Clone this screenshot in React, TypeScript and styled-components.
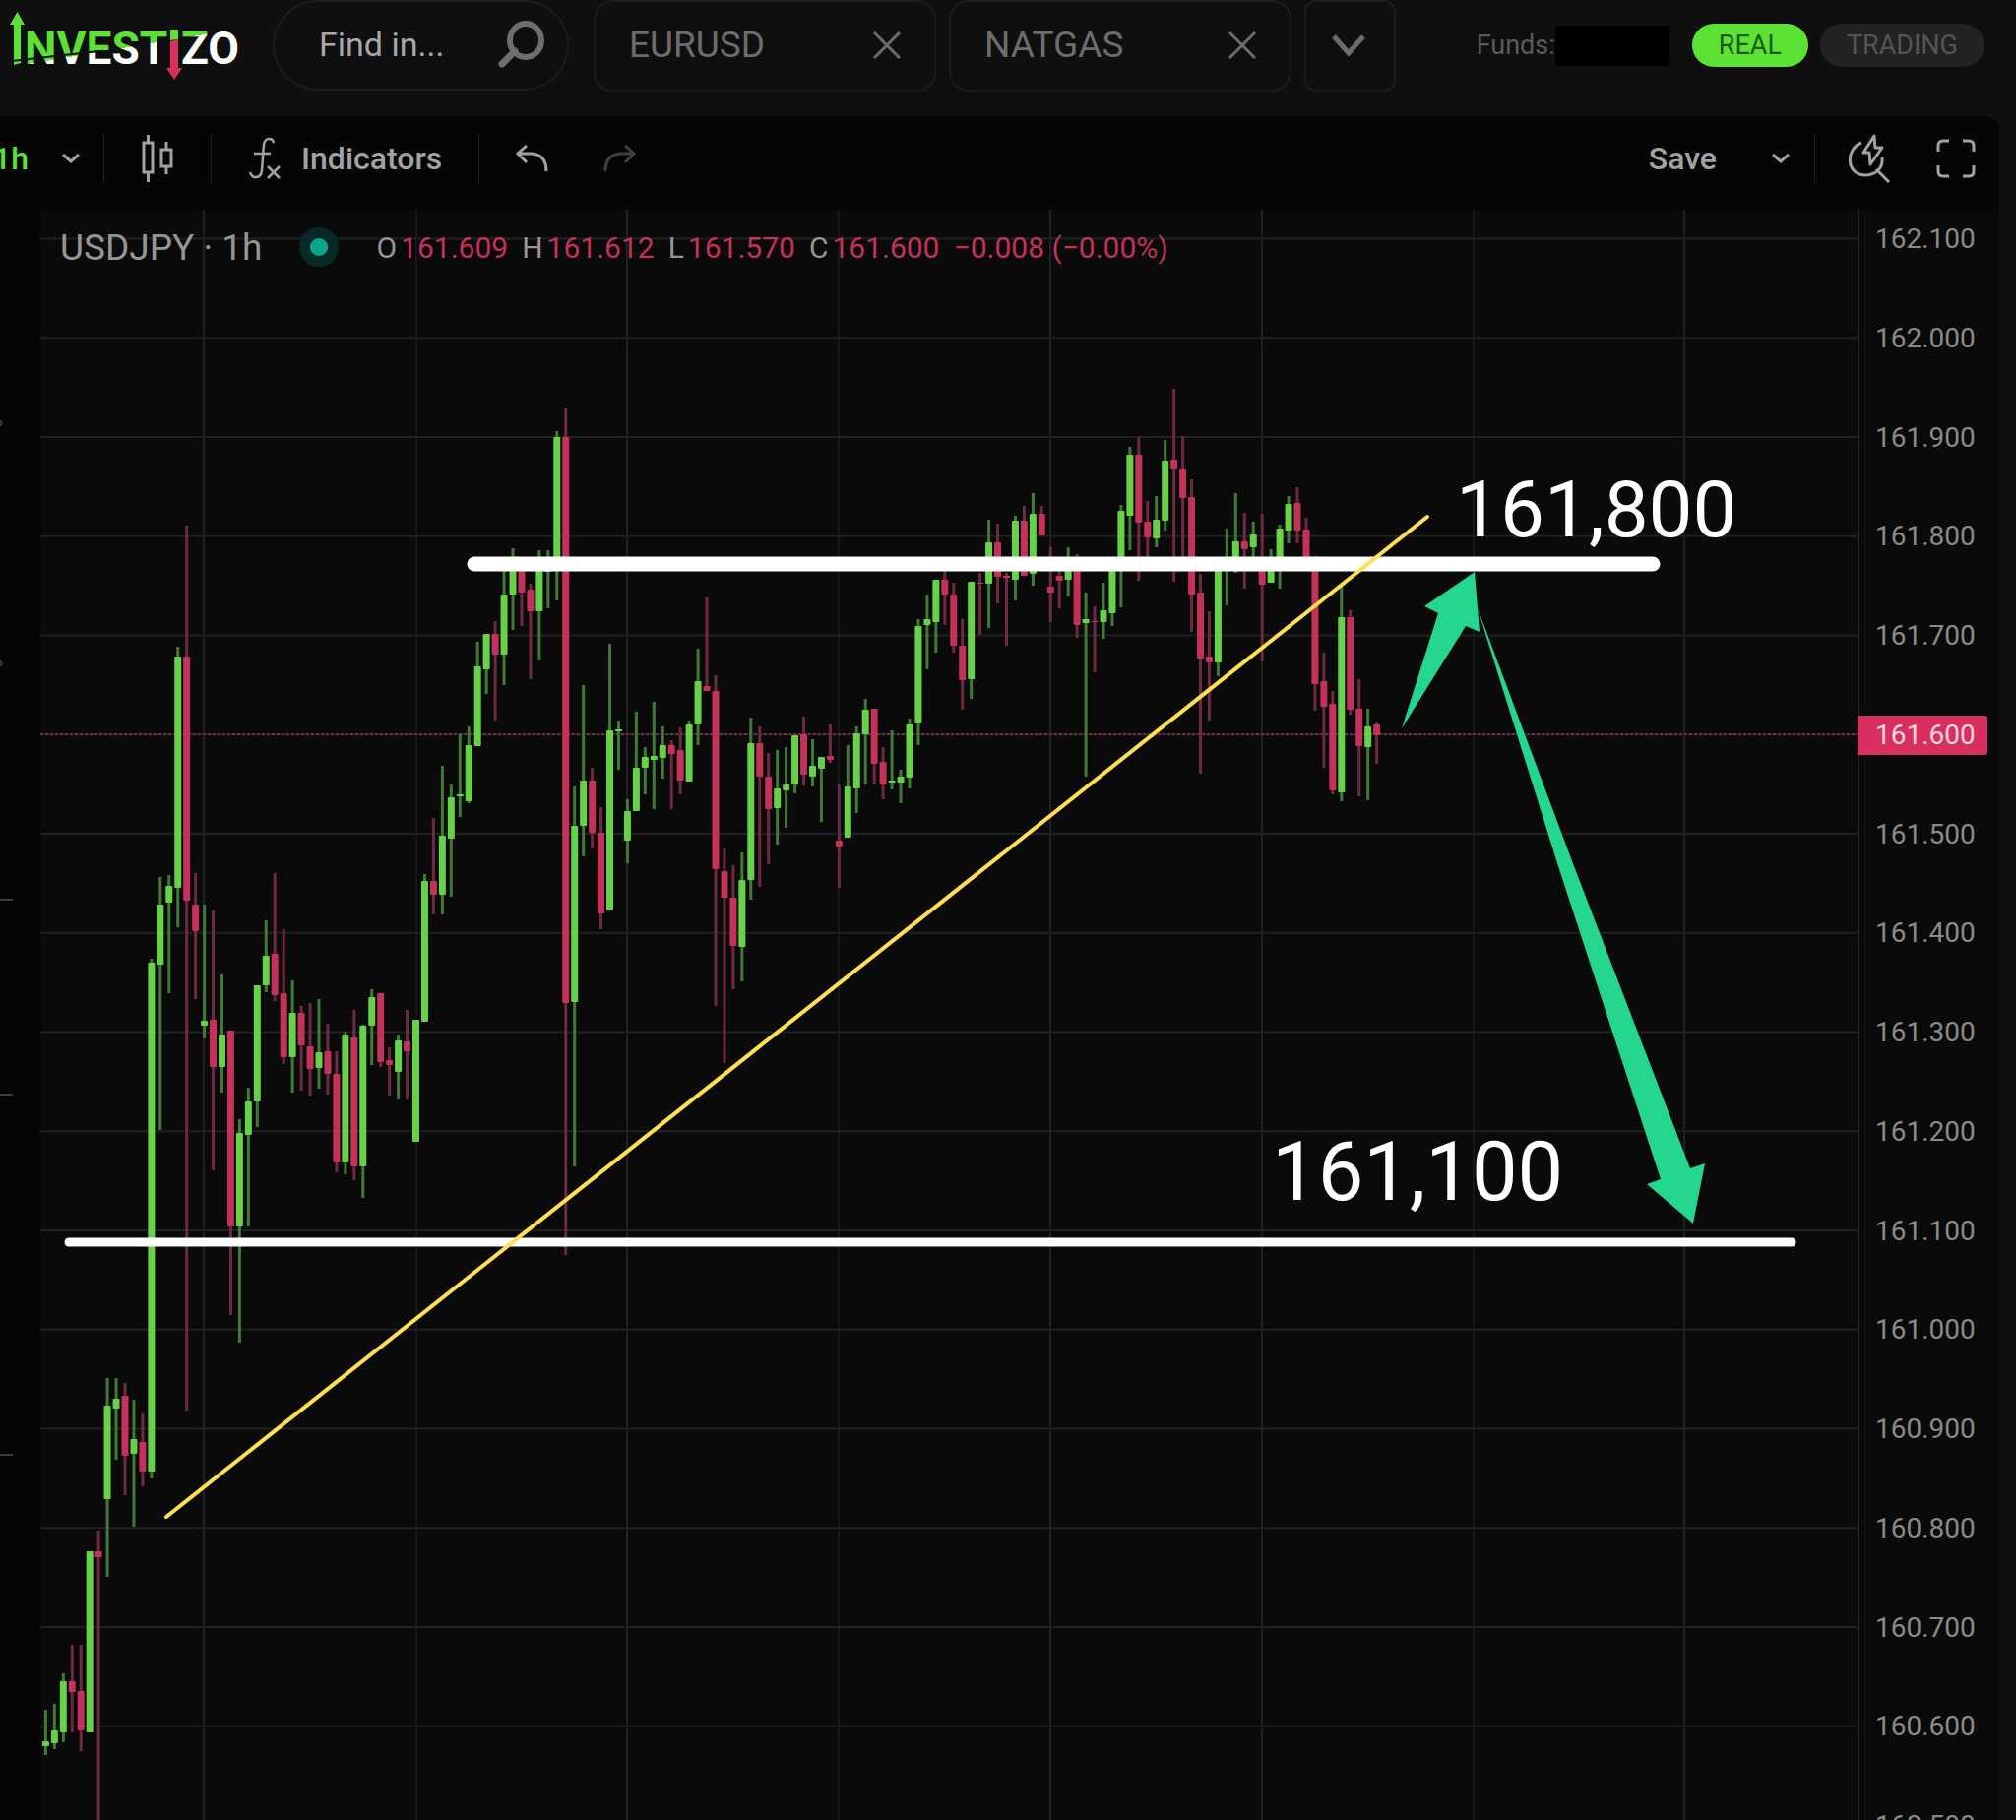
import React from "react";
import styled, { createGlobalStyle } from "styled-components";

const color = {
  header: "#0f0f0f",
  panel: "#050505",
  plot: "#0a0a0a",
  outline: "#1c1c1c",
  grid: "#212121",
  gridDim: "#171717",
  text: "#a2a2a2",
  muted: "#6c6c6c",
  brand: "#5be234",
  up: "#67d147",
  upWick: "#417a35",
  down: "#c43159",
  downWick: "#6f2a40",
  arrow: "#24d68e",
  trend: "#ffe052",
};

const GlobalStyle = createGlobalStyle`
  *, *::before, *::after { box-sizing: border-box; }
  body {
    margin: 0;
    background: ${color.header};
    font-family: Roboto, "Liberation Sans", sans-serif;
    color: ${color.text};
  }
  button, input { font: inherit; color: inherit; }
`;

const Page = styled.div`
  display: flex;
  flex-direction: column;
  min-height: 100vh;
  overflow: hidden;
`;

const Header = styled.header`
  display: flex;
  gap: 25px;
  height: 118px;
  padding-right: 32px;
`;

const Logo = styled.a`
  flex: none;
  display: block;
  width: 252px;
  height: 93px;

  svg { display: block; }
`;

const Search = styled.label`
  flex: 0 1 301px;
  display: flex;
  align-items: center;
  justify-content: space-between;
  height: 92px;
  padding: 0 22px 2px 45px;
  border: 2px solid ${color.outline};
  border-radius: 46px;
`;

const SearchInput = styled.input`
  width: 140px;
  padding: 0;
  border: 0;
  outline: 0;
  background: transparent;
  font-size: 34px;

  &::placeholder { color: #a8a8a8; opacity: 1; }
`;

const Tabs = styled.nav`
  flex: 0 1 815px;
  display: flex;
  gap: 13px;
`;

const Tab = styled.div`
  flex: 0 1 348px;
  display: flex;
  align-items: center;
  justify-content: space-between;
  height: 93px;
  padding: 0 34px 2px;
  border: 2px solid ${color.outline};
  border-radius: 20px;
  font-size: 37px;
  color: ${color.muted};
`;

const PlainButton = styled.button`
  display: flex;
  align-items: center;
  padding: 0;
  border: 0;
  background: none;
  cursor: pointer;
`;

const MoreTabs = styled(PlainButton)`
  flex: 0 0 93px;
  justify-content: center;
  height: 93px;
  padding-right: 3px;
  border: 2px solid ${color.outline};
  border-radius: 12px;
  color: ${color.muted};
`;

const Account = styled.div`
  display: flex;
  align-items: center;
  gap: 23px;
  height: 92px;
  margin-left: auto;
  font-size: 27px;
  color: #5a5a5a;
`;

const Funds = styled.div`
  display: flex;
  align-items: center;
`;

const FundsMask = styled.span`
  width: 116px;
  height: 41px;
  background: #000000;
`;

const Modes = styled.div`
  display: flex;
  gap: 12px;
`;

const ModeButton = styled.button<{ $active?: boolean }>`
  height: 44px;
  padding: 0 27px;
  border: 0;
  border-radius: 22px;
  line-height: 42px;
  background: ${(p) => (p.$active ? color.brand : "#222222")};
  color: ${(p) => (p.$active ? "#1c5a10" : "#555555")};
  cursor: pointer;
`;

const ChartPanel = styled.main`
  flex: 1;
  margin-right: 17px;
  border-top-right-radius: 16px;
  background: ${color.panel};
  overflow: hidden;
`;

const Toolbar = styled.div`
  display: flex;
  align-items: center;
  justify-content: space-between;
  height: 95px;
  padding: 0 24px 10px 0;
  font-size: 32px;
  font-weight: 500;
`;

const ToolGroup = styled.div`
  display: flex;
  align-items: center;
  gap: 37px;
`;

const Interval = styled(PlainButton)`
  gap: 34px;
  margin: 0 -13px 0 -7px;
  color: ${color.text};

  span { color: ${color.brand}; }
`;

const Indicators = styled(PlainButton)`
  gap: 20px;
`;

const History = styled.div`
  display: flex;
  gap: 56px;
`;

const SaveGroup = styled.div`
  display: flex;
  align-items: center;
  gap: 56px;
  margin-right: -12px;
`;

const ViewTools = styled.div`
  display: flex;
  gap: 46px;
  margin-left: -4px;
`;

const ToolButton = styled(PlainButton)`
  &:disabled { color: #404040; cursor: default; }
`;

const Separator = styled.span`
  width: 1px;
  height: 50px;
  background: #202020;
`;

const ChartBody = styled.div`
  display: flex;
`;

const Gutter = styled.div`
  flex: 0 0 41px;

  svg { display: block; }
`;

const Plot = styled.section`
  position: relative;
  flex: 1;
  background: ${color.plot};
`;

const Canvas = styled.svg`
  display: block;
  width: 100%;
  height: auto;
`;

const Legend = styled.div`
  position: absolute;
  top: 16px;
  left: 20px;
  display: flex;
  align-items: center;
  gap: 38px;
  height: 44px;
  font-size: 30px;
  white-space: nowrap;
`;

const Symbol = styled.h1`
  margin: 0;
  font-size: 37px;
  font-weight: 400;
  color: #969696;
`;

const Status = styled.span`
  width: 40px;
  height: 40px;
  border: 11px solid #062a25;
  border-radius: 50%;
  background: #0ca58c;
`;

const Quotes = styled.div`
  display: flex;
  gap: 14px;
  color: ${color.down};
`;

const Quote = styled.span`
  display: flex;
  gap: 4px;

  b { font-weight: 400; color: #969696; }
`;

const Axis = styled.aside`
  flex: 0 0 144px;
  display: flex;
  flex-direction: column;
  justify-content: space-between;
  align-items: flex-start;
  margin-bottom: -22px;
  padding-top: 14px;
  border-left: 2px solid #252525;
  background: ${color.plot};
  font-size: 28px;
  line-height: 32px;
  color: #8a8a8a;
`;

const Tick = styled.span`
  padding-left: 16px;
`;

const PriceTag = styled.span`
  margin: -4px 0 -4px -2px;
  padding: 4px 12px 4px 18px;
  border-radius: 0 3px 3px 0;
  background: #d92f60;
  color: #f3d6de;
`;

const Annotation = styled.text`
  font-family: Roboto, "Liberation Sans", sans-serif;
  fill: #ffffff;
`;

type Candle = [dir: 0 | 1, high: number, top: number, bottom: number, low: number];

const candles: Candle[] = [
  [1, 1737, 1769, 1774, 1783], [1, 1731, 1758, 1771, 1777], [1, 1700, 1708, 1760, 1770],
  [0, 1671, 1708, 1719, 1760], [0, 1671, 1718, 1758, 1779], [1, 1576, 1576, 1760, 1760],
  [0, 1555, 1576, 1582, 1900], [1, 1400, 1428, 1523, 1602], [1, 1400, 1421, 1431, 1483],
  [0, 1405, 1418, 1479, 1519], [1, 1422, 1462, 1477, 1551], [0, 1436, 1465, 1495, 1510],
  [1, 974, 978, 1495, 1502], [1, 891, 919, 980, 1148], [1, 889, 900, 917, 1009],
  [1, 657, 667, 902, 942], [0, 534, 667, 915, 1433], [0, 887, 919, 946, 1015],
  [1, 919, 1037, 1042, 1055], [0, 925, 1036, 1084, 1189], [1, 990, 1051, 1084, 1110],
  [0, 1047, 1047, 1246, 1336], [1, 1137, 1151, 1246, 1364], [1, 1105, 1119, 1153, 1246],
  [1, 1001, 1001, 1119, 1145], [1, 935, 971, 1001, 1008], [0, 887, 969, 1011, 1017],
  [0, 944, 1009, 1074, 1081], [1, 996, 1029, 1074, 1110], [0, 1022, 1029, 1062, 1108],
  [0, 1019, 1063, 1086, 1113], [1, 1015, 1069, 1085, 1106], [0, 1040, 1068, 1091, 1112],
  [0, 1068, 1091, 1181, 1191], [1, 1048, 1051, 1181, 1193], [0, 1026, 1054, 1185, 1199],
  [1, 1041, 1042, 1185, 1217], [1, 1005, 1013, 1042, 1082], [0, 1009, 1009, 1079, 1084],
  [0, 1064, 1077, 1082, 1113], [1, 1051, 1057, 1089, 1117], [0, 1026, 1058, 1068, 1117],
  [1, 1036, 1036, 1160, 1160], [1, 888, 895, 1038, 1038], [0, 831, 895, 909, 929],
  [1, 778, 849, 909, 929], [1, 797, 810, 852, 911], [1, 746, 807, 809, 830],
  [1, 738, 757, 814, 816], [1, 652, 677, 758, 758], [1, 644, 644, 680, 705],
  [0, 631, 644, 665, 732], [1, 578, 604, 665, 696], [1, 557, 575, 604, 640],
  [0, 572, 575, 602, 636], [0, 593, 599, 621, 690], [1, 559, 575, 621, 671],
  [1, 559, 575, 581, 618], [1, 438, 444, 573, 610], [0, 415, 444, 1019, 1275],
  [1, 799, 839, 1018, 1185], [1, 696, 793, 839, 870], [0, 780, 793, 846, 862],
  [0, 820, 846, 928, 944], [1, 654, 742, 925, 925], [1, 732, 741, 743, 782],
  [1, 812, 824, 854, 877], [1, 723, 780, 824, 824], [1, 759, 769, 780, 807],
  [1, 713, 768, 772, 822], [1, 738, 757, 770, 791], [0, 752, 757, 766, 822],
  [0, 739, 762, 793, 807], [1, 732, 736, 794, 794], [1, 659, 692, 736, 757],
  [0, 607, 697, 702, 702], [0, 686, 702, 883, 1022], [0, 862, 885, 912, 1080],
  [0, 879, 912, 961, 1005], [1, 866, 894, 962, 997], [1, 729, 755, 894, 914],
  [0, 738, 755, 789, 901], [0, 765, 789, 822, 878], [1, 762, 801, 821, 858],
  [1, 759, 797, 803, 841], [1, 747, 747, 797, 806], [0, 728, 746, 787, 798],
  [1, 751, 778, 789, 799], [1, 769, 769, 781, 835], [0, 736, 768, 772, 775],
  [0, 797, 854, 860, 902], [1, 757, 799, 851, 851], [1, 738, 745, 801, 826],
  [1, 710, 721, 746, 797], [0, 720, 720, 776, 797], [0, 759, 774, 797, 812],
  [1, 742, 793, 795, 802], [1, 782, 789, 795, 816], [1, 730, 736, 790, 801],
  [1, 629, 636, 735, 757], [1, 604, 629, 635, 680], [1, 589, 589, 632, 663],
  [0, 577, 589, 604, 635], [0, 592, 604, 656, 663], [0, 629, 656, 691, 721],
  [1, 591, 591, 690, 710], [0, 582, 592, 593, 645], [1, 528, 551, 593, 638],
  [0, 532, 551, 586, 613], [0, 582, 585, 587, 656], [1, 524, 529, 589, 610],
  [0, 514, 529, 585, 585], [1, 501, 522, 583, 595], [0, 514, 522, 544, 544],
  [0, 556, 596, 602, 632], [0, 573, 585, 590, 618], [1, 556, 577, 589, 606],
  [0, 563, 570, 635, 648], [1, 602, 629, 633, 789], [0, 616, 631, 632, 683],
  [1, 592, 620, 632, 649], [1, 570, 570, 623, 636], [1, 513, 519, 575, 617],
  [1, 454, 462, 524, 559], [0, 444, 462, 531, 590], [0, 509, 530, 546, 570],
  [1, 504, 528, 547, 556], [1, 447, 468, 529, 539], [0, 395, 467, 476, 591],
  [0, 443, 476, 506, 570], [0, 487, 505, 604, 642], [0, 583, 602, 669, 786],
  [0, 621, 667, 673, 732], [1, 577, 577, 673, 687], [1, 537, 578, 580, 615],
  [1, 501, 550, 577, 582], [0, 521, 550, 558, 598], [1, 530, 543, 556, 570],
  [0, 522, 577, 594, 672], [1, 558, 570, 592, 592], [1, 533, 537, 577, 598],
  [1, 504, 512, 539, 552], [0, 495, 511, 539, 552], [0, 526, 538, 572, 572],
  [0, 565, 570, 695, 722], [0, 663, 692, 718, 780], [0, 702, 715, 803, 807],
  [1, 595, 627, 805, 814], [0, 620, 627, 721, 726], [0, 690, 720, 758, 809],
  [1, 720, 738, 759, 813], [0, 734, 736, 747, 776],
];

const ticks = Array.from({ length: 17 }, (_, i) => (162.1 - i * 0.1).toFixed(3));
const columns = [207, 423, 637, 852, 1067, 1282, 1497, 1711];

const quotes = [
  ["O", "161.609"],
  ["H", "161.612"],
  ["L", "161.570"],
  ["C", "161.600"],
];

function LogoMark() {
  return (
    <svg width="252" height="93" viewBox="0 0 252 93" role="img" aria-label="Investizo">
      <defs>
        <linearGradient id="logoSplit" gradientUnits="userSpaceOnUse" x1="125" y1="18" x2="135" y2="78">
          <stop offset="0.5" stopColor={color.brand} />
          <stop offset="0.5" stopColor="#ffffff" />
        </linearGradient>
      </defs>
      <g fontFamily="Roboto, sans-serif" fontWeight="700" fontSize="46" fill="url(#logoSplit)">
        <text x="25" y="65">NVEST</text>
        <text x="184" y="65">ZO</text>
      </g>
      <path d="M17.500 12L25 25H21V64L14 66V25H10Z" fill={color.brand} />
      <path d="M173 30H181V40L173 41Z" fill={color.brand} />
      <path d="M173 42L181 40V69H185L177 81L169 69H173Z" fill="#dc2f60" />
      <path d="M12 62L100 52" stroke={color.header} strokeWidth="2" />
    </svg>
  );
}

const stroke = { fill: "none", stroke: "currentColor", strokeWidth: 3 };

const CloseIcon = () => (
  <svg width="28" height="28" viewBox="0 0 28 28" {...stroke}>
    <path d="M1 1L27 27M27 1L1 27" />
  </svg>
);

const ChevronIcon = () => (
  <svg width="18" height="12" viewBox="0 0 18 12" {...stroke}>
    <path d="M1 2L9 9L17 2" />
  </svg>
);

function PlotCanvas() {
  return (
    <Canvas viewBox="41 213 1846 1636" role="img" aria-label="USDJPY hourly candles">
      {columns.map((x, i) => (
        <path
          key={x}
          d={`M${x} 213V1849`}
          stroke={[1, 3, 6].includes(i) ? color.gridDim : color.grid}
          strokeWidth="2"
        />
      ))}
      {ticks.map((t, i) => (
        <path key={t} d={`M41 ${242.5 + i * 100.75}H1888`} stroke={color.grid} strokeWidth="2" />
      ))}
      <path d="M41 746H1888" stroke="#702c40" strokeWidth="2" strokeDasharray="3 2" />
      {candles.map(([up, high, top, bottom, low], i) => {
        const x = 46.4 + i * 8.955;
        return (
          <g key={i}>
            <rect x={x - 1.5} y={high} width="3" height={low - high} fill={up ? color.upWick : color.downWick} />
            <rect
              x={x - 3.5}
              y={top}
              width="7"
              height={bottom - top}
              rx={bottom - top > 4 ? 1 : 0}
              fill={up ? color.up : color.down}
            />
          </g>
        );
      })}
      <g stroke="#ffffff" strokeLinecap="round">
        <path d="M482 573H1679" strokeWidth="15" />
        <path d="M70 1262H1820" strokeWidth="9" />
      </g>
      <path d="M169 1541L1450 525" stroke={color.trend} strokeWidth="4" strokeLinecap="round" />
      <g fill={color.arrow}>
        <path d="M1424 740L1461 623L1447 616L1498 581L1503 642L1489 636Z" />
        <path d="M1500 615L1583 880L1687 1198L1673 1203L1720 1243L1732 1182L1717 1187L1599 880Z" />
      </g>
      <Annotation x="1479" y="545" fontSize="80">161,800</Annotation>
      <Annotation x="1292" y="1219" fontSize="83">161,100</Annotation>
    </Canvas>
  );
}

export default function App() {
  return (
    <>
      <GlobalStyle />
      <Page>
        <Header>
          <Logo href="#"><LogoMark /></Logo>
          <Search>
            <SearchInput type="text" placeholder="Find in..." aria-label="Find instrument" />
            <svg width="48" height="48" viewBox="0 0 48 48" fill="none" stroke="#6e6e6e">
              <ellipse cx="28" cy="20" rx="16" ry="17" strokeWidth="6" />
              <path d="M17 31L4 44" strokeWidth="7" strokeLinecap="round" />
            </svg>
          </Search>
          <Tabs>
            {["EURUSD", "NATGAS"].map((name) => (
              <Tab key={name}>
                <span>{name}</span>
                <PlainButton aria-label={`Close ${name}`}><CloseIcon /></PlainButton>
              </Tab>
            ))}
            <MoreTabs aria-label="More instruments">
              <svg width="34" height="24" viewBox="0 0 34 24" fill="none" stroke="currentColor" strokeWidth="5">
                <path d="M2 2L17 19L32 2" />
              </svg>
            </MoreTabs>
          </Tabs>
          <Account>
            <Funds>
              <span>Funds:</span>
              <FundsMask />
            </Funds>
            <Modes>
              <ModeButton $active>REAL</ModeButton>
              <ModeButton>TRADING</ModeButton>
            </Modes>
          </Account>
        </Header>

        <ChartPanel>
          <Toolbar>
            <ToolGroup>
              <Interval>
                <span>1h</span>
                <ChevronIcon />
              </Interval>
              <Separator />
              <ToolButton aria-label="Chart type">
                <svg width="34" height="48" viewBox="0 0 34 48" {...stroke}>
                  <path d="M3 8H12V38H3ZM7.500 0V8M7.500 38V48M21 15H31V32H21ZM26 7V15M26 32V40" />
                </svg>
              </ToolButton>
              <Separator />
              <Indicators>
                <svg width="34" height="44" viewBox="0 0 34 44" {...stroke} strokeWidth="2.500">
                  <path d="M26 6C25 1 17 0 16 8L14 34C13 43 4 43 2 36M6 17H23M20 30L32 42M32 30L20 42" />
                </svg>
                Indicators
              </Indicators>
              <Separator />
              <History>
                <ToolButton aria-label="Undo">
                  <svg width="33" height="28" viewBox="0 0 33 28" {...stroke}>
                    <path d="M11 1L2 9L11 18M2 9H16Q31 10 31 27" />
                  </svg>
                </ToolButton>
                <ToolButton aria-label="Redo" disabled>
                  <svg width="33" height="28" viewBox="0 0 33 28" {...stroke}>
                    <path d="M22 1L31 9L22 18M31 9H17Q2 10 2 27" />
                  </svg>
                </ToolButton>
              </History>
            </ToolGroup>
            <ToolGroup>
              <SaveGroup>
                <ToolButton>Save</ToolButton>
                <ToolButton aria-label="Save options"><ChevronIcon /></ToolButton>
              </SaveGroup>
              <Separator />
              <ViewTools>
                <ToolButton aria-label="Quick search">
                  <svg width="44" height="50" viewBox="0 0 44 50" {...stroke}>
                    <path d="M14 9C-2 15-2 41 17 42C30 42 36 34 35 24M29 36L42 49" />
                    <path d="M27 2L16 19H22L23 31L35 14H28Z" strokeLinejoin="round" />
                  </svg>
                </ToolButton>
                <ToolButton aria-label="Fullscreen">
                  <svg width="40" height="40" viewBox="0 0 40 40" {...stroke}>
                    <path d="M2 13V7Q2 2 7 2H13M27 2H33Q38 2 38 7V13M38 27V33Q38 38 33 38H27M13 38H7Q2 38 2 33V27" />
                  </svg>
                </ToolButton>
              </ViewTools>
            </ToolGroup>
          </Toolbar>

          <ChartBody>
            <Gutter>
              <svg width="41" height="1300" viewBox="0 213 41 1300" fill="none" stroke="#3a3a40" strokeWidth="2">
                <path d="M0 427L2 430L0 433M0 671L2 674L0 677M0 914H13M0 1112H13M0 1478H13" />
                <path d="M31 213V1513" stroke="#0a0a0a" />
              </svg>
            </Gutter>
            <Plot>
              <PlotCanvas />
              <Legend>
                <Symbol>USDJPY · 1h</Symbol>
                <Status />
                <Quotes>
                  {quotes.map(([key, value]) => (
                    <Quote key={key}>
                      <b>{key}</b>
                      {value}
                    </Quote>
                  ))}
                  <span>−0.008 (−0.00%)</span>
                </Quotes>
              </Legend>
            </Plot>
            <Axis>
              {ticks.map((t) =>
                t === "161.600" ? <PriceTag key={t}>{t}</PriceTag> : <Tick key={t}>{t}</Tick>
              )}
            </Axis>
          </ChartBody>
        </ChartPanel>
      </Page>
    </>
  );
}
